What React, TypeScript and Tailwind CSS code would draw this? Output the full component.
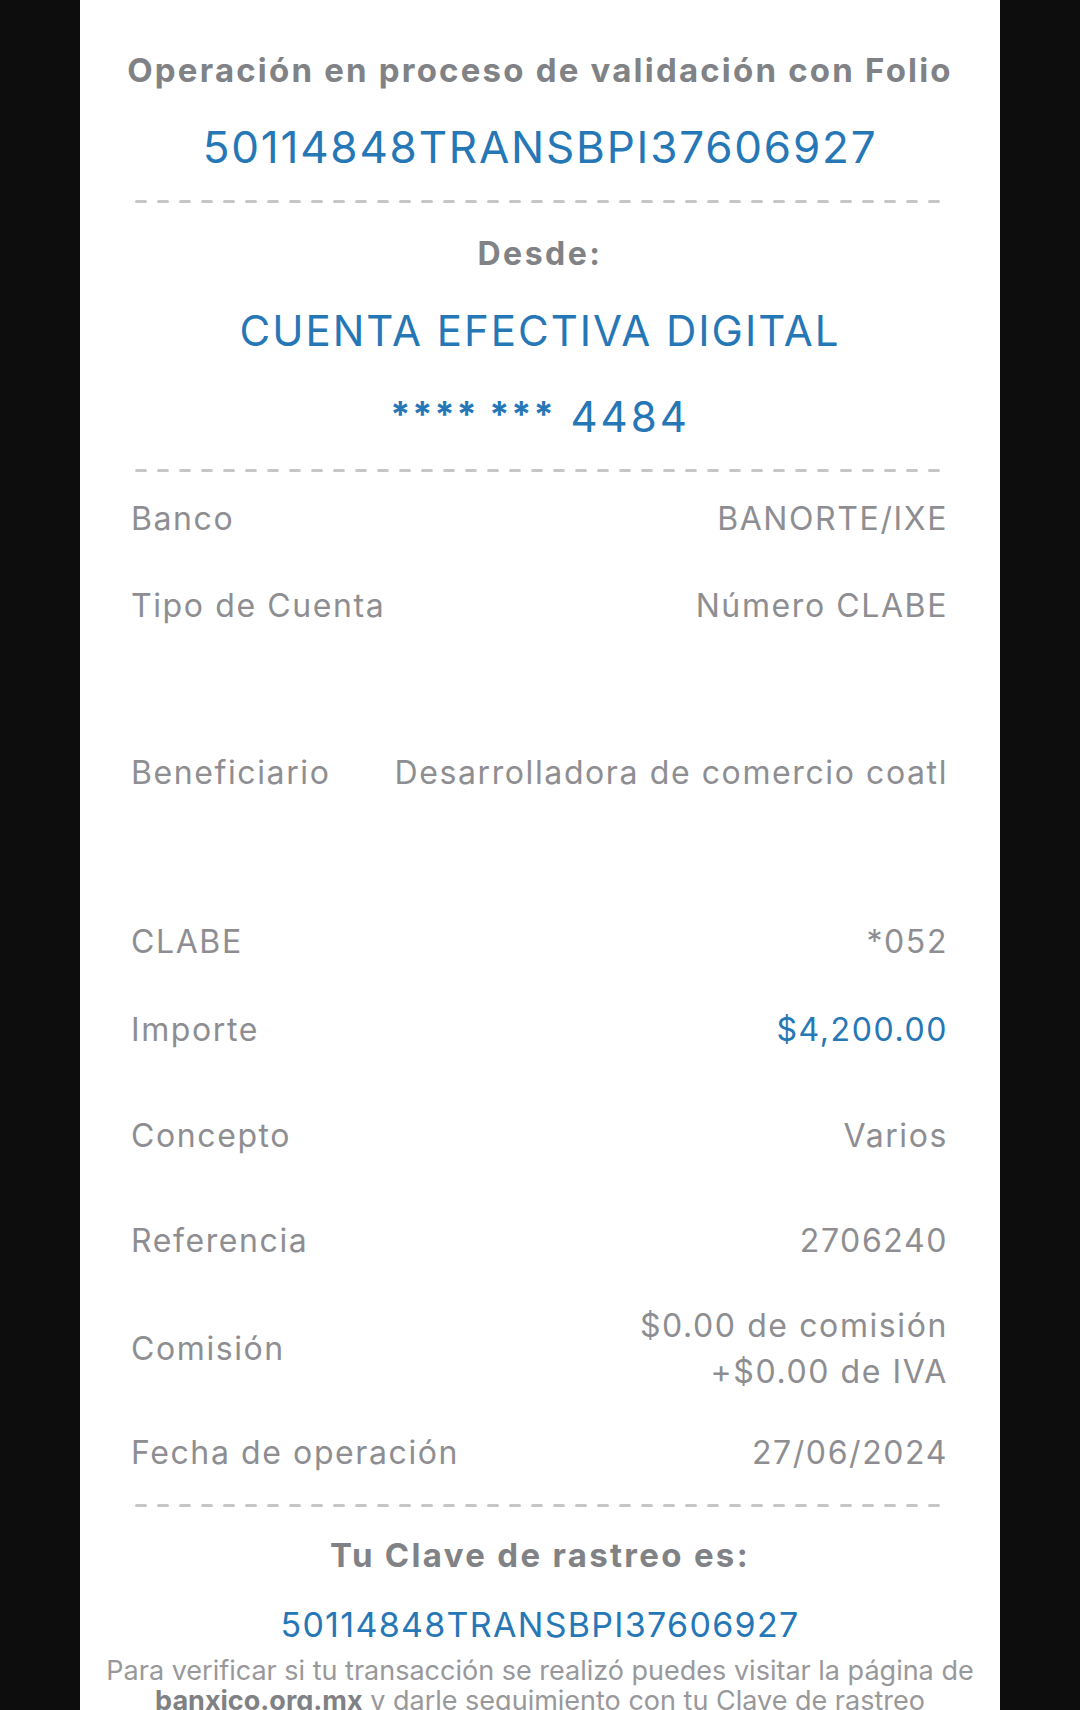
const font = { fontFamily: "Inter, 'Noto Sans', sans-serif" };

interface Row {
  label: string;
  value: string;
  top: string;
  blue?: boolean;
}

const rows: Row[] = [
  { label: "Banco", value: "BANORTE/IXE", top: "mt-[27px]" },
  { label: "Tipo de Cuenta", value: "Número CLABE", top: "mt-[47px]" },
  { label: "Beneficiario", value: "Desarrolladora de comercio coatl", top: "mt-[127px]" },
  { label: "CLABE", value: "*052", top: "mt-[129px]" },
  { label: "Importe", value: "$4,200.00", top: "mt-[48px]", blue: true },
  { label: "Concepto", value: "Varios", top: "mt-[66px]" },
  { label: "Referencia", value: "2706240", top: "mt-[65px]" },
];

function Dashes({ className }: { className: string }) {
  return (
    <div className={`ml-[55px] w-[805px] h-[3px] flex justify-between ${className}`}>
      {Array.from({ length: 37 }).map((_, i) => (
        <span key={i} className="w-[12px] h-[3px] rounded-full bg-[#c6c6c8]" />
      ))}
    </div>
  );
}

export default function App() {
  return (
    <div className="w-[1080px] h-[1710px] bg-[#0d0d0d] px-[80px] overflow-hidden" style={font}>
      <div className="w-[920px] h-full bg-white flex flex-col">
        {/* Header */}
        <p className="pt-[50px] text-center text-[33px] leading-[40px] tracking-[2.2px] font-bold text-[#808286] whitespace-nowrap">
          Operación en proceso de validación con Folio
        </p>
        <p className="mt-[31px] text-center text-[44px] leading-[52px] tracking-[1.8px] text-[#2677b6]">
          50114848TRANSBPI37606927
        </p>
        <Dashes className="mt-[27px]" />

        {/* Cuenta origen */}
        <p className="mt-[31px] text-center text-[32px] leading-[40px] tracking-[2.5px] font-bold text-[#808286]">
          Desde:
        </p>
        <p className="mt-[32px] text-center text-[42px] leading-[50px] tracking-[2px] text-[#2677b6]">
          CUENTA EFECTIVA DIGITAL
        </p>
        <p className="mt-[33px] text-center text-[42px] leading-[50px] tracking-[3px] text-[#2677b6]">
          <span className="text-[36px] font-bold tracking-[2px] align-[5px]">**** ***</span> 4484
        </p>
        <Dashes className="mt-[27px]" />

        {/* Detalle */}
        <div className="pl-[51px] pr-[52px] flex flex-col text-[32px] leading-[40px] tracking-[1.6px] text-[#8e8e92]">
          {rows.map(row => (
            <div key={row.label} className={`flex justify-between gap-6 ${row.top}`}>
              <span className="whitespace-nowrap">{row.label}</span>
              <span className={`whitespace-nowrap text-right ${row.blue ? "text-[#2677b6]" : ""}`}>{row.value}</span>
            </div>
          ))}
          <div className="mt-[42px] flex justify-between items-center">
            <span>Comisión</span>
            <div className="text-right leading-[46px]">
              <p>$0.00 de comisión</p>
              <p>+$0.00 de IVA</p>
            </div>
          </div>
          <div className="mt-[38px] flex justify-between">
            <span>Fecha de operación</span>
            <span>27/06/2024</span>
          </div>
        </div>
        <Dashes className="mt-[31px]" />

        {/* Rastreo */}
        <p className="mt-[28px] text-center text-[33px] leading-[40px] tracking-[2.3px] font-bold text-[#808286]">
          Tu Clave de rastreo es:
        </p>
        <p className="mt-[29px] text-center text-[34px] leading-[42px] tracking-[1.3px] text-[#2677b6]">
          50114848TRANSBPI37606927
        </p>
        <p className="mt-[10px] px-[10px] text-center text-[27px] leading-[30px] text-[#98989b]">
          Para verificar si tu transacción se realizó puedes visitar la página de{" "}
          <b className="font-bold text-[#7f8185]">banxico.org.mx</b> y darle seguimiento con tu Clave de rastreo
        </p>
      </div>
    </div>
  );
}
